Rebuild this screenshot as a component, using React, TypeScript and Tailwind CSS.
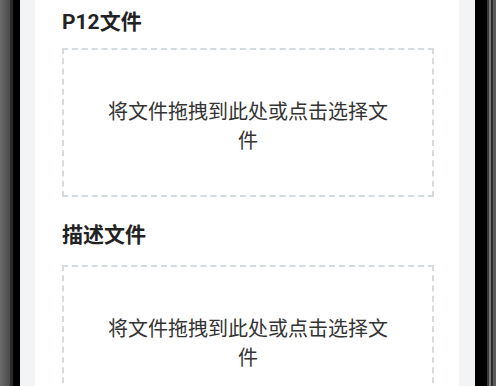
import React from "react";

const fontStack = "font-['Roboto','Noto_Sans_CJK_SC',sans-serif]";

function DropZone() {
  return (
    <div className="h-[149px] border-2 border-dashed border-[#d3dbdf] px-10 pt-[48px] text-center text-[20px] leading-[29px] text-[#333333]">
      将文件拖拽到此处或点击选择文件
    </div>
  );
}

export default function App() {
  return (
    <div className={`flex h-[386px] w-[496px] overflow-hidden bg-black ${fontStack}`}>
      {/* left phone edge */}
      <div className="flex w-[20px] shrink-0">
        <div className="w-[10px] bg-gradient-to-r from-[#6b6b6b] to-[#4a4a4a]" />
        <div className="w-[3px] bg-[#2a2a2a]" />
        <div className="w-[7px] bg-black" />
      </div>

      {/* screen */}
      <div className="flex w-[455px] shrink-0 bg-[#f3f4f6] pl-[15px] pr-[16px]">
        <div className="flex-1 bg-white pl-[27px] pr-[25px] pt-[8px]">
          <h2 className="mb-[12px] text-[21px] font-bold leading-[28px] text-[#222222]">P12文件</h2>
          <DropZone />
          <h2 className="mb-[16px] mt-[24px] text-[21px] font-bold leading-[28px] text-[#222222]">描述文件</h2>
          <DropZone />
        </div>
      </div>

      {/* right phone edge */}
      <div className="flex w-[21px] shrink-0">
        <div className="w-[12px] bg-black" />
        <div className="w-[2px] bg-[#3a3a3a]" />
        <div className="w-[2px] bg-[#7a7a7a]" />
        <div className="w-[2px] bg-[#2e2e2e]" />
        <div className="w-[3px] bg-[#5c5c5c]" />
      </div>
    </div>
  );
}
